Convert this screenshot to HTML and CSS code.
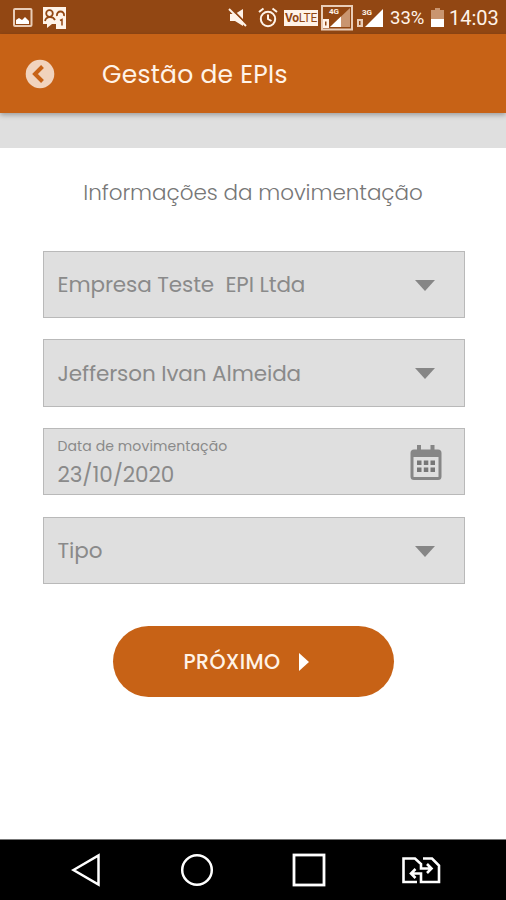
FILE: index.html
```html
<!DOCTYPE html>
<html lang="pt-BR">
<head>
<meta charset="utf-8">
<title>Gestão de EPIs</title>
<link rel="stylesheet" href="styles.css">
</head>
<body>
<div class="status">
  <div class="status-left">
    <svg width="20" height="20" viewBox="0 0 20 20"><rect x="1" y="1" width="17.500" height="17" rx="1" fill="none" stroke="#e9cdb8" stroke-width="2"/><path d="M3 16v-4l3-2 3 2 3-3 4 4v3z" fill="#fff"/></svg>
    <svg width="24" height="24" viewBox="0 0 24 24"><path d="M0 1h23v22h-9v-5H9l-5 4v-4H0z" fill="#fff3e8"/><g fill="none" stroke="#924713" stroke-width="1.800"><circle cx="6.500" cy="7.500" r="3.300"/><path d="M2 15c1-5 8-5 10-1M14 10c-1-6 8-6 7 0"/></g><path d="M13 12h10v11H13z" fill="#fff3e8"/><path d="M17 14.500l2-1v6" fill="none" stroke="#924713" stroke-width="1.500"/></svg>
  </div>
  <div class="status-right">
    <svg class="mute" width="20" height="20" viewBox="0 0 20 20"><path d="M2 6h5l8-5v17l-8-5H2z" fill="#fff3e8"/><path d="M2.500 0l18 18" stroke="#924713" stroke-width="2"/><path d="M1 1l17 17" stroke="#fff3e8" stroke-width="2"/></svg>
    <svg class="alarm" width="20" height="21" viewBox="0 0 20 21" fill="none" stroke="#fff3e8" stroke-width="2"><circle cx="10" cy="12" r="7.200"/><path d="M1 5l4.500-3.500M19 5l-4.500-3.500M10 7.500V12l3.500 2"/></svg>
    <span class="volte"><b>Vo</b>LTE</span>
    <svg class="sim-one" width="32" height="26" viewBox="0 0 32 26"><rect x="1" y="1" width="30" height="23.500" fill="none" stroke="#e9cdb8" stroke-width="2"/><path d="M9 22L29 3v19z" fill="#c99570"/><path d="M9 22L20 11.500V22z" fill="#fff"/><path d="M2 14h6v9H2z" fill="#fff3e8"/><path d="M4 16.500h1.500v4H4z" fill="#924713"/><text x="8" y="9" class="net">4G</text></svg>
    <svg class="sim-two" width="28" height="22" viewBox="0 0 28 22"><path d="M9 20L27 2v18z" fill="#fff"/><path d="M1 12h6v8H1z" fill="#e9cdb8"/><path d="M3 14h1.500v4H3z" fill="#924713"/><text x="6" y="8" class="net">3G</text></svg>
    <span class="percent">33%</span>
    <svg class="battery" width="13" height="20" viewBox="0 0 13 20"><path d="M0 2h4V0h5v2h4v9H0z" fill="#c99570"/><path d="M0 11h13v8H0z" fill="#fff"/></svg>
    <span class="clock">14:03</span>
  </div>
</div>
<header class="bar">
  <svg width="30" height="30" viewBox="0 0 30 30"><circle cx="15" cy="15" r="14.300" fill="#f1d3bd"/><path d="M17.500 7.500L10 15l7.500 7.500" fill="none" stroke="#c76216" stroke-width="4"/></svg>
  <h1>Gestão de EPIs</h1>
</header>
<div class="band"></div>
<main>
  <h2>Informações da movimentação</h2>
  <div class="fields">
    <div class="field"><span class="value">Empresa Teste&nbsp; EPI Ltda</span><svg width="20" height="11" viewBox="0 0 20 11"><path d="M0 0h20L10 11z" fill="#868686"/></svg></div>
    <div class="field"><span class="value">Jefferson Ivan Almeida</span><svg width="20" height="11" viewBox="0 0 20 11"><path d="M0 0h20L10 11z" fill="#868686"/></svg></div>
    <div class="field date"><div class="stack"><span class="label">Data de movimentação</span><span class="value">23/10/2020</span></div>
      <svg width="32" height="36" viewBox="0 0 32 36"><rect x="2" y="6" width="28" height="27.500" rx="2" fill="none" stroke="#868686" stroke-width="3"/><path d="M2 6h28v6H2zM7 0h4v6H7zM20.500 0h4v6h-4z" fill="#868686"/><path d="M7 15.500h4.500v4.500H7zM13.800 15.500h4.500v4.500h-4.500zM20.500 15.500H25v4.500h-4.500zM7 22.500h4.500V27H7zM13.800 22.500h4.500V27h-4.500zM20.500 22.500H25V27h-4.500z" fill="#777"/></svg></div>
    <div class="field"><span class="value">Tipo</span><svg width="20" height="11" viewBox="0 0 20 11"><path d="M0 0h20L10 11z" fill="#868686"/></svg></div>
  </div>
  <button class="next"><span>PRÓXIMO</span><svg width="10" height="18" viewBox="0 0 10 18"><path d="M0 0l10 9-10 9z" fill="#fff"/></svg></button>
</main>
<nav>
  <svg width="30" height="34" viewBox="0 0 30 34"><path d="M2.500 17L27.500 2.500v29z" fill="none" stroke="#fff" stroke-width="2.500"/></svg>
  <svg width="34" height="34" viewBox="0 0 34 34"><circle cx="17" cy="17" r="14.800" fill="none" stroke="#fff" stroke-width="2.500"/></svg>
  <svg width="34" height="34" viewBox="0 0 34 34"><rect x="2" y="2" width="30" height="30" fill="none" stroke="#fff" stroke-width="2.800"/></svg>
  <svg width="40" height="28" viewBox="0 0 40 28" fill="none" stroke="#fff" stroke-width="2.600"><path d="M16 26H2.500V2.500H14l6 5.500v4.500h10M26 8l4.500 4.500L26 17M22 2.500h9l7 7V26H20V17.500H10M14.500 13L10 17.500l4.500 4.500"/></svg>
</nav>
</body>
</html>
```
FILE: styles.css
```css
* { box-sizing: border-box; }
body {
  margin: 0;
  width: 506px;
  height: 900px;
  display: flex;
  flex-direction: column;
  overflow: hidden;
  background: #fff;
  font-family: Poppins, Inter, sans-serif;
  color: #8a8a8a;
}
svg { display: block; flex: none; }
h1, h2 { margin: 0; font-weight: 400; white-space: nowrap; }

.status {
  height: 34px;
  display: flex;
  justify-content: space-between;
  align-items: center;
  padding: 1px 7px 0 13px;
  background: #924713;
  color: #fff3e8;
  font: 19px/34px Roboto, sans-serif;
}
.status-left, .status-right { display: flex; align-items: center; }
.status-left { gap: 10px; }
.alarm { margin-left: 10px; }
.volte {
  width: 34px;
  height: 16px;
  margin-left: 6px;
  background: #fff3e8;
  color: #924713;
  font: 12px/16px Roboto, sans-serif;
  text-align: center;
  letter-spacing: -0.2px;
}
.sim-one { margin-left: 3px; }
.sim-two { margin-left: 3px; }
.net { font: bold 8px Roboto, sans-serif; fill: #fff3e8; }
.percent { width: 35px; margin-left: 6px; font-size: 18.5px; white-space: nowrap; }
.battery { margin-left: 6px; }
.clock { width: 50px; margin-left: 5px; font-size: 20px; }

.bar {
  position: relative;
  height: 79px;
  display: flex;
  align-items: center;
  gap: 47px;
  padding: 0 25px;
  background: #c76216;
  box-shadow: 0 2px 5px rgba(0, 0, 0, 0.3);
}
.bar h1 { padding-top: 2px; color: #fff3e8; font-size: 25px; letter-spacing: 0.25px; }
.band { height: 35px; background: #dfdfdf; }

main {
  flex: 1;
  display: flex;
  flex-direction: column;
  align-items: center;
}
h2 { margin-top: 30px; font-size: 21.5px; line-height: 30px; font-weight: 300; color: #777; letter-spacing: -0.05px; }
.fields {
  width: 422px;
  margin: 42.500px 0 0 1px;
  display: grid;
  grid-template-rows: repeat(4, 67.500px);
  gap: 21.200px;
}
.field {
  display: flex;
  align-items: center;
  justify-content: space-between;
  padding: 2px 29px 0 14px;
  background: #dfdfdf;
  border: 1px solid #b9b9b9;
}
.date { padding-right: 22px; }
.stack { display: flex; flex-direction: column; padding-top: 1px; }
.value { font-size: 21.5px; line-height: 30px; white-space: nowrap; letter-spacing: -0.1px; }
.label { font-size: 14px; line-height: 20px; margin-bottom: 4px; letter-spacing: 0.1px; }
.next {
  width: 281px;
  height: 71px;
  margin-top: 42px;
  display: flex;
  align-items: center;
  justify-content: center;
  gap: 18px;
  padding: 0 14px 0 0;
  border: 0;
  border-radius: 36px;
  background: #c76216;
  color: #fff3e8;
  font: 500 20.500px Poppins, Inter, sans-serif;
  letter-spacing: 0.4px;
}
nav {
  height: 61px;
  display: flex;
  align-items: center;
  padding-left: 71px;
  background: #000;
  border-top: 1px solid #777;
}
nav svg:nth-child(2) { margin-left: 79px; }
nav svg:nth-child(3) { margin-left: 78px; }
nav svg:nth-child(4) { margin-left: 75px; }
```
